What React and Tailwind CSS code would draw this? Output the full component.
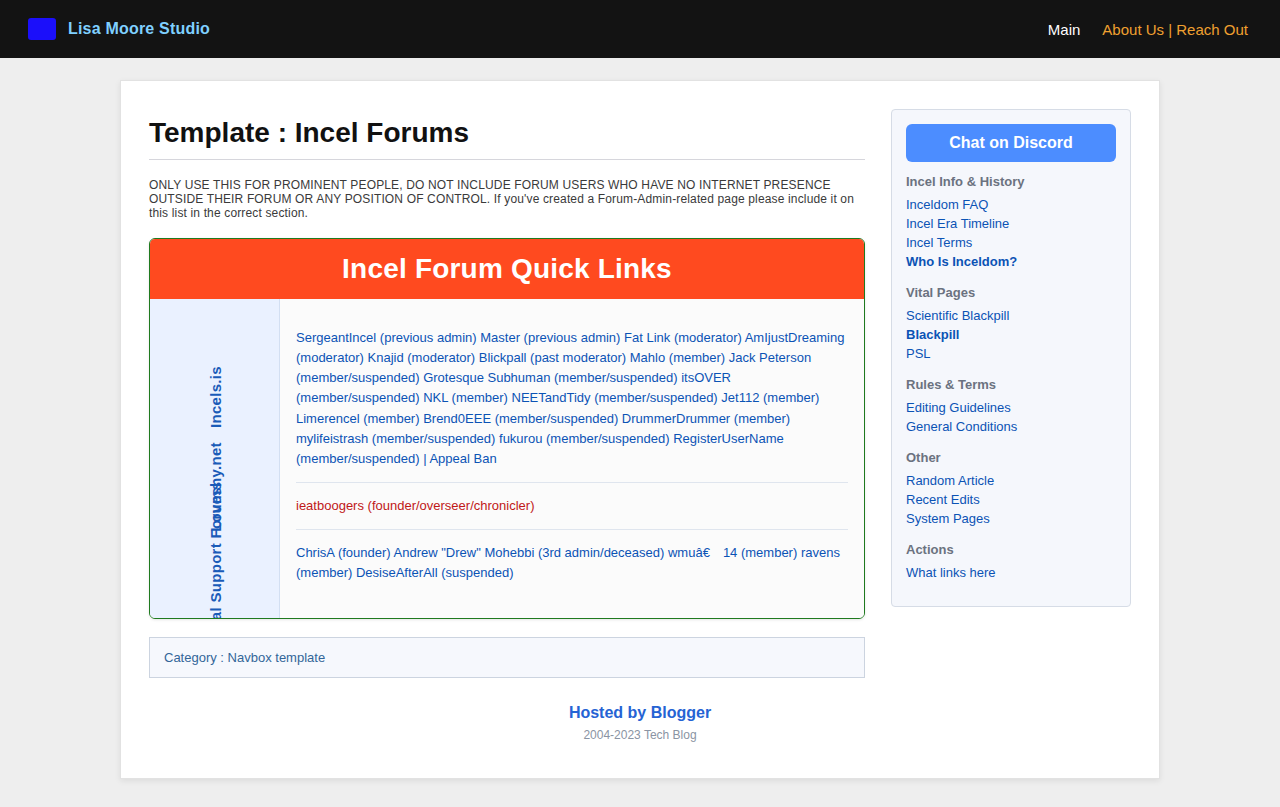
const sections = [
  { title: "Incel Info & History", links: [["Inceldom FAQ"], ["Incel Era Timeline"], ["Incel Terms"], ["Who Is Inceldom?", true]] },
  { title: "Vital Pages", links: [["Scientific Blackpill"], ["Blackpill", true], ["PSL"]] },
  { title: "Rules & Terms", links: [["Editing Guidelines"], ["General Conditions"]] },
  { title: "Other", links: [["Random Article"], ["Recent Edits"], ["System Pages"]] },
  { title: "Actions", links: [["What links here"]] },
];

function SideLabel({ height = "h-[90px]", children }) {
  return (
    <div className={`${height} flex items-center justify-center pl-[3px]`}>
      <span className="-rotate-90 whitespace-nowrap text-[15px] leading-[18px] font-bold tracking-[0.3px] text-[#1a5bb8]">{children}</span>
    </div>
  );
}

export default function App() {
  return (
    <div className="min-h-[807px] bg-[#eeeeee] font-['Liberation_Sans',Arial,sans-serif] text-[#222]">
      <header className="flex h-[58px] items-center justify-between bg-[#131313] pr-8 pl-7">
        <div className="flex items-center gap-3">
          <div className="h-[22px] w-7 rounded-[3px] bg-[#1b0ffa]" />
          <span className="text-base leading-5 font-bold tracking-[0.2px] text-[#7fd0ff]">Lisa Moore Studio</span>
        </div>
        <nav className="flex gap-[22px] pt-0.5 text-[15px] leading-5">
          <a className="text-white">Main</a>
          <a className="text-[#f0a030]">About Us | Reach Out</a>
        </nav>
      </header>

      <div className="mx-auto mt-[22px] h-[699px] w-[1040px] border border-[#e2e2e2] bg-white p-7 shadow-[0_2px_6px_rgba(0,0,0,0.08)]">
        <div className="flex items-start gap-[26px]">
          <main className="w-[716px]">
            <h1 className="h-[51px] border-b border-[#d6d6dc] pt-2 text-[28px] leading-8 font-bold text-[#111]">Template : Incel Forums</h1>
            <p className="mt-[18px] text-[12px] leading-[14px] tracking-[0.15px] text-[#3a3a3a]">
              ONLY USE THIS FOR PROMINENT PEOPLE, DO NOT INCLUDE FORUM USERS WHO HAVE NO INTERNET PRESENCE OUTSIDE THEIR FORUM OR ANY POSITION OF CONTROL. If you've created a Forum-Admin-related page please include it on this list in the correct section.
            </p>

            <section className="mt-[18px] h-[381px] overflow-hidden rounded-md border border-[#1f7a1f] shadow-[0_1px_3px_rgba(0,0,0,0.1)]">
              <h2 className="h-[60px] bg-[#ff4a1f] pt-[14px] text-center text-[28px] leading-8 font-bold tracking-[0.2px] text-white">Incel Forum Quick Links</h2>
              <div className="flex h-[319px]">
                <div className="w-[130px] border-r border-[#d3dff2] bg-[#eaf1ff] pt-[53px]">
                  <SideLabel>Incels.is</SideLabel>
                  <SideLabel>Loveshy.net</SideLabel>
                  <SideLabel height="h-[74px]">Mental Support Forums</SideLabel>
                </div>
                <div className="flex-1 bg-[#fbfbfb] px-4 pt-[29px] text-[13px] leading-[20.15px] text-[#0b53b5]">
                  <p className="border-b border-[#dfe5ee] pb-[13px]">
                    SergeantIncel (previous admin) Master (previous admin) Fat Link (moderator) AmIjustDreaming (moderator) Knajid (moderator) Blickpall (past moderator) Mahlo (member) Jack Peterson (member/suspended) Grotesque Subhuman (member/suspended) itsOVER (member/suspended) NKL (member) NEETandTidy (member/suspended) Jet112 (member) Limerencel (member) Brend0EEE (member/suspended) DrummerDrummer (member) mylifeistrash (member/suspended) fukurou (member/suspended) RegisterUserName (member/suspended) | Appeal Ban
                  </p>
                  <p className="border-b border-[#dfe5ee] py-[13px] text-[#c01818]">ieatboogers (founder/overseer/chronicler)</p>
                  <p className="pt-[13px]">
                    ChrisA (founder) Andrew "Drew" Mohebbi (3rd admin/deceased) wmuâ€{"\u2003"}14 (member) ravens (member) DesiseAfterAll (suspended)
                  </p>
                </div>
              </div>
            </section>

            <div className="mt-[18px] flex h-[41px] items-center border border-[#ccd4e0] bg-[#f6f8fd] px-3.5 text-[13px] text-[#336699]">Category : Navbox template</div>
          </main>

          <aside className="h-[498px] w-60 rounded border border-[#d6dce6] bg-[#f5f7fc] p-3.5">
            <div className="flex h-[38px] items-center justify-center rounded-md bg-[#4c8dff] text-base font-bold text-white">Chat on Discord</div>
            <div className="mt-3 flex flex-col gap-3.5 text-[13px]">
              {sections.map((s) => (
                <div key={s.title}>
                  <h3 className="leading-[15px] font-bold text-[#6b7280]">{s.title}</h3>
                  <ul className="mt-1.5 leading-[19px] text-[#0b53b5]">
                    {s.links.map(([label, strong]) => (
                      <li key={label} className={strong ? "font-bold" : ""}>{label}</li>
                    ))}
                  </ul>
                </div>
              ))}
            </div>
          </aside>
        </div>

        <footer className="mt-6 text-center">
          <div className="text-base leading-[22px] font-bold text-[#2563d4]">Hosted by Blogger</div>
          <div className="mt-1 text-[12px] leading-[14px] text-[#8a94a3]">2004-2023 Tech Blog</div>
        </footer>
      </div>
    </div>
  );
}
